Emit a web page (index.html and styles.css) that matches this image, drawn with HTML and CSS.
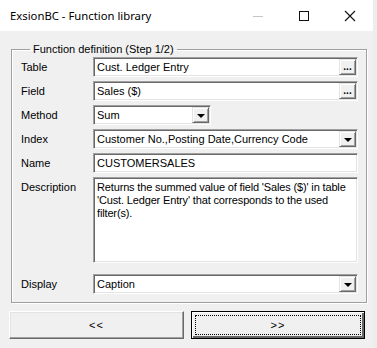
FILE: index.html
```html
<!DOCTYPE html>
<html lang="en">
<head>
    <meta charset="UTF-8">
    <title>ExsionBC - Function library</title>
    <link rel="stylesheet" href="styles.css">
</head>
<body>
    <div class="window">
        <div class="titlebar">
            <span class="title">ExsionBC - Function library</span>
            <div class="controls">
                <span class="ctl">
                    <svg width="12" height="12" viewBox="0 0 12 12"><line x1="1" y1="6.5" x2="11" y2="6.5" stroke="#c6c6c6" stroke-width="1"/></svg>
                </span>
                <span class="ctl">
                    <svg width="12" height="12" viewBox="0 0 12 12"><rect x="1.5" y="1.5" width="9" height="9" fill="none" stroke="#111" stroke-width="1"/></svg>
                </span>
                <span class="ctl">
                    <svg width="12" height="12" viewBox="0 0 12 12"><path d="M1 1 L11 11 M11 1 L1 11" stroke="#111" stroke-width="1.1"/></svg>
                </span>
            </div>
        </div>
        <div class="content">
            <fieldset class="group">
                <legend>Function definition (Step 1/2)</legend>
                <div class="row">
                    <span class="label">Table</span>
                    <div class="field">
                        <span class="value">Cust. Ledger Entry</span>
                        <span class="mini-btn dots">...</span>
                    </div>
                </div>
                <div class="row">
                    <span class="label">Field</span>
                    <div class="field">
                        <span class="value">Sales ($)</span>
                        <span class="mini-btn dots">...</span>
                    </div>
                </div>
                <div class="row">
                    <span class="label">Method</span>
                    <div class="field short">
                        <span class="value">Sum</span>
                        <span class="mini-btn"><span class="arrow"></span></span>
                    </div>
                </div>
                <div class="row">
                    <span class="label">Index</span>
                    <div class="field">
                        <span class="value">Customer No.,Posting Date,Currency Code</span>
                        <span class="mini-btn"><span class="arrow"></span></span>
                    </div>
                </div>
                <div class="row">
                    <span class="label">Name</span>
                    <div class="field">
                        <span class="value">CUSTOMERSALES</span>
                    </div>
                </div>
                <div class="row top">
                    <span class="label">Description</span>
                    <div class="field memo">Returns the summed value of field 'Sales ($)' in table 'Cust. Ledger Entry' that corresponds to the used filter(s).</div>
                </div>
                <div class="row display">
                    <span class="label">Display</span>
                    <div class="field">
                        <span class="value">Caption</span>
                        <span class="mini-btn"><span class="arrow"></span></span>
                    </div>
                </div>
            </fieldset>
            <div class="buttons">
                <div class="btn prev">&lt;&lt;</div>
                <div class="btn next"><span class="focus">&gt;&gt;</span></div>
            </div>
        </div>
    </div>
</body>
</html>
```

FILE: styles.css
```css
body {
    margin: 0;
    background-color: #ededed;
    font-family: "Liberation Sans", Arial, sans-serif;
    font-size: 11px;
    color: #000;
}
.window {
    width: 373px;
    height: 348px;
    background-color: #f0f0f0;
}
.titlebar {
    height: 31px;
    background-color: #fff;
    display: flex;
    align-items: center;
    justify-content: space-between;
}
.title {
    font-family: "Noto Sans", sans-serif;
    font-size: 11.3px;
    padding-left: 10px;
    color: #000;
}
.controls {
    display: flex;
    height: 31px;
}
.ctl {
    width: 46px;
    display: flex;
    align-items: center;
    justify-content: center;
}
.content {
    padding-top: 12px;
}
.group {
    margin: 0 0 0 11px;
    width: 356px;
    box-sizing: border-box;
    border: 1px solid #a0a0a0;
    box-shadow: inset 1px 1px 0 #fff, 1px 1px 0 #fff;
    padding: 1px 8px 8px 9px;
    display: flex;
    flex-direction: column;
    gap: 4px;
}
.group legend {
    padding: 0 3px;
    margin-left: 9px;
    line-height: 13px;
}
.row {
    display: flex;
    align-items: center;
}
.row.top {
    align-items: flex-start;
}
.row.top .label {
    padding-top: 4px;
}
.row.display {
    margin-top: 7px;
}
.label {
    width: 72px;
    flex: none;
}
.field {
    flex: 1;
    height: 20px;
    box-sizing: border-box;
    background-color: #fff;
    border: 1px solid;
    border-color: #a0a0a0 #fff #fff #a0a0a0;
    box-shadow: inset 1px 1px 0 #696969, inset -1px -1px 0 #e3e3e3;
    display: flex;
    align-items: center;
    padding: 2px 2px 2px 3px;
}
.field.short {
    flex: none;
    width: 118px;
}
.value {
    flex: 1;
    white-space: nowrap;
    overflow: hidden;
}
.memo {
    height: 86px;
    display: block;
    line-height: 13px;
    padding: 3px 0 2px 3px;
    letter-spacing: -0.15px;
}
.mini-btn {
    width: 17px;
    height: 16px;
    box-sizing: border-box;
    background-color: #f0f0f0;
    border: 1px solid;
    border-color: #e3e3e3 #696969 #696969 #e3e3e3;
    box-shadow: inset 1px 1px 0 #fff, inset -1px -1px 0 #a0a0a0;
    display: flex;
    align-items: center;
    justify-content: center;
    margin-right: -1px;
}
.dots {
    font-weight: bold;
    font-size: 10px;
    line-height: 10px;
    align-items: flex-end;
    padding-bottom: 2px;
}
.arrow {
    width: 0;
    height: 0;
    border-left: 4px solid transparent;
    border-right: 4px solid transparent;
    border-top: 4px solid #000;
    margin-top: 1px;
}
.buttons {
    display: flex;
    gap: 7px;
    margin: 8px 0 0 9px;
}
.btn {
    height: 28px;
    box-sizing: border-box;
    background-color: #f0f0f0;
    display: flex;
    align-items: center;
    justify-content: center;
    letter-spacing: 1px;
    border: 1px solid;
    border-color: #fff #696969 #696969 #fff;
    box-shadow: inset -1px -1px 0 #a0a0a0, inset 1px 1px 0 #e3e3e3;
}
.prev {
    width: 175px;
}
.next {
    width: 174px;
    border: 1px solid #000;
    box-shadow: inset 1px 1px 0 #fff, inset -2px -2px 0 #696969;
    padding: 3px;
}
.focus {
    flex: 1;
    align-self: stretch;
    display: flex;
    align-items: center;
    justify-content: center;
    border: 1px dotted #000;
}
```
